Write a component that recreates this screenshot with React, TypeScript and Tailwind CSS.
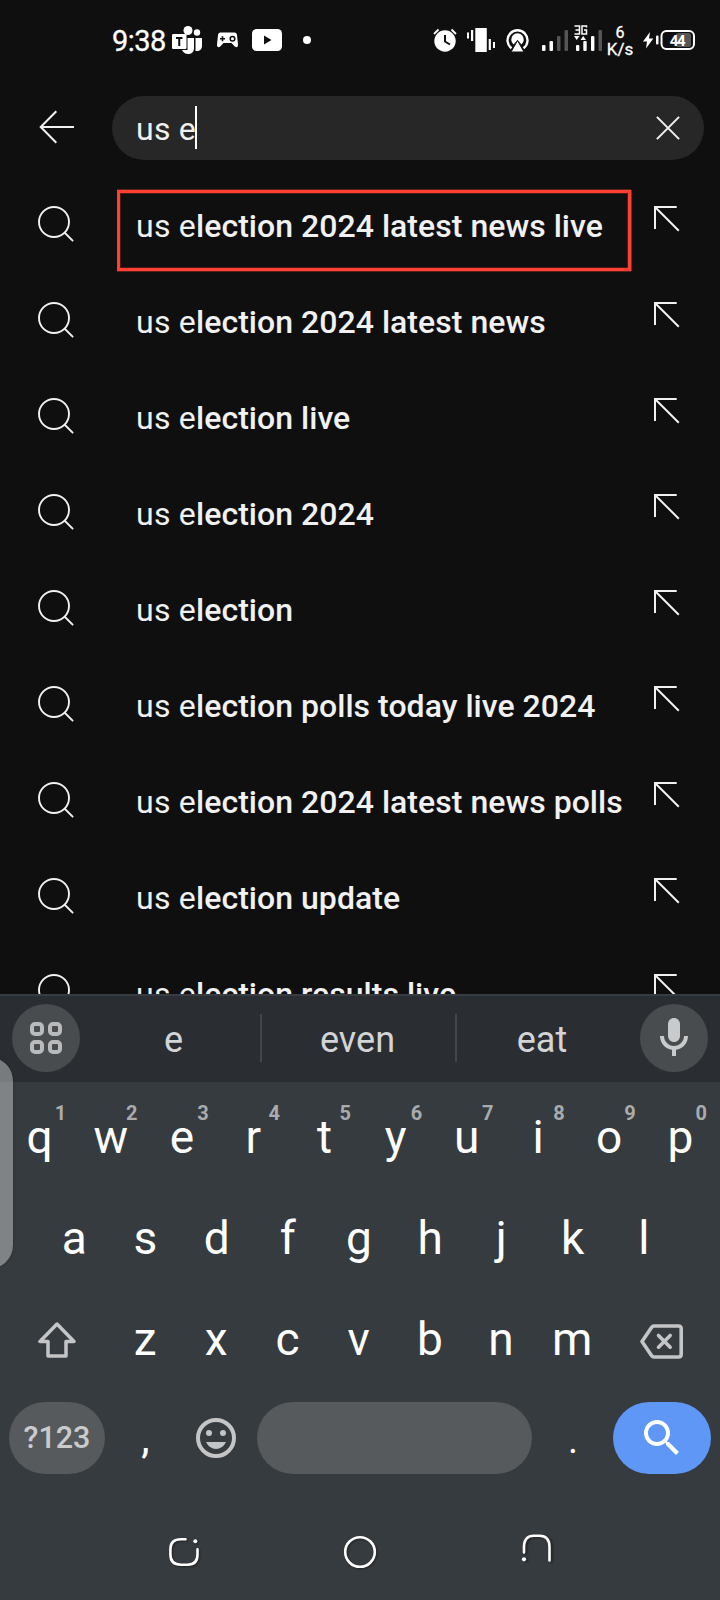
import React from "react";

const suggestions = [
  "lection 2024 latest news live",
  "lection 2024 latest news",
  "lection live",
  "lection 2024",
  "lection",
  "lection polls today live 2024",
  "lection 2024 latest news polls",
  "lection update",
  "lection results live",
];

function StatusBar() {
  return (
    <div className="flex h-[80px] items-center pl-[112px] pr-[25px] text-white">
      <span className="w-[60px] pt-[2px] text-[29px] leading-[78px] tracking-[-0.5px] whitespace-nowrap [-webkit-text-stroke:0.3px_white]">9:38</span>
      <svg className="h-[28px] w-[30px]" viewBox="0 0 30 28" fill="currentColor">
        <circle cx="16" cy="4.5" r="4.5" />
        <circle cx="25" cy="6.5" r="3.2" />
        <path d="M15.500 12H22v10c0 4-2.500 6-6 6-3 0-5-1.800-6-4h5.500z" />
        <path d="M23.500 12H30v8c0 3.500-2.500 5.500-6.500 5z" />
        <rect x="0" y="8" width="14.500" height="15" rx="1.200" />
        <path d="M4 12h6.500M7.250 12v8" stroke="#0f0f0f" strokeWidth="2" />
      </svg>
      <svg className="ml-[15px] h-[16px] w-[21px]" viewBox="0 0 21 16">
        <path fill="currentColor" d="M3.500.5h14c1.500 0 2.300 1 2.500 2.500l1 9.500c.2 2.800-1.800 3.200-3.200 2L14.500 11h-8l-3.300 3.500c-1.400 1.200-3.400.8-3.200-2L1 3C1.200 1.500 2 .5 3.500.5z" />
        <path d="M3 6.700h5M5.500 4.200v5" stroke="#0f0f0f" strokeWidth="1.600" />
        <circle cx="15.500" cy="6.700" r="2.300" fill="none" stroke="#0f0f0f" strokeWidth="1.500" />
      </svg>
      <svg className="ml-[14px] h-[22px] w-[30px]" viewBox="0 0 30 22">
        <rect width="30" height="22" rx="4.500" fill="currentColor" />
        <path d="M12 6.500v9l7.500-4.500z" fill="#0f0f0f" />
      </svg>
      <span className="ml-[21px] size-2 rounded-full bg-white" />

      <svg className="ml-auto h-[24px] w-[24px]" viewBox="0 0 24 24">
        <circle cx="12" cy="13" r="10.700" fill="currentColor" />
        <path d="M1 6l4.500-4.500M23 6l-4.500-4.500" stroke="currentColor" strokeWidth="1.800" />
        <path d="M12 7v6.500l5 3" fill="none" stroke="#0f0f0f" strokeWidth="2" />
      </svg>
      <svg className="ml-[10px] h-[24px] w-[28px]" viewBox="0 0 28 24" fill="currentColor">
        <rect x="8.300" y="0" width="11.500" height="24" rx=".5" />
        <rect x="0" y="4.500" width="2" height="6" />
        <rect x="4" y="2" width="2.200" height="11" />
        <rect x="21.700" y="11" width="2.200" height="11" />
        <rect x="26" y="14" width="2" height="6" />
      </svg>
      <svg className="ml-[11px] h-[24px] w-[23px]" viewBox="0 0 23 24">
        <path d="M5.500 20.300a10 10 0 1 1 12 0" fill="none" stroke="currentColor" strokeWidth="2.400" />
        <path d="M7.500 16.500a6.300 6.300 0 1 1 8 0L11.500 12z" fill="currentColor" />
        <path d="M11.500 12.500L18 24H5z" fill="currentColor" stroke="#0f0f0f" strokeWidth="1" />
      </svg>
      <svg className="ml-[13px] h-[21px] w-[26px]" viewBox="0 0 26 21" fill="currentColor">
        <rect x="0" y="15" width="3.500" height="6" rx="1" />
        <rect x="7.500" y="11" width="3.500" height="10" rx="1" />
        <rect x="15" y="6" width="3.500" height="15" rx="1" fill="#555" />
        <rect x="22.500" y="0" width="3.500" height="21" rx="1" fill="#555" />
      </svg>
      <svg className="ml-[6px] h-[27px] w-[28px] -translate-y-[2px]" viewBox="0 0 28 27" fill="currentColor">
        <path d="M.5 1h5v8h-5M1.500 5h4M12.500 2.500V1H8v8h4.500V5H10" fill="none" stroke="currentColor" strokeWidth="1.500" />
        <path d="M0 11h5.500L2.700 15zM6.500 15h5.500L9.200 11z" />
        <rect x="2" y="20" width="3.300" height="6" rx="1" />
        <rect x="9.300" y="16" width="3.400" height="10" rx="1" />
        <rect x="17" y="11" width="3.400" height="15" rx="1" />
        <rect x="24.500" y="5" width="3.500" height="21" rx="1" fill="#555" />
      </svg>
      <span className="ml-[6px] flex w-[24px] flex-col items-center pt-px text-[16px] leading-[16px] [-webkit-text-stroke:0.3px_white]">
        <span>6</span>
        <span className="text-[17px]">K/s</span>
      </span>
      <svg className="ml-[10px] h-[20px] w-[53px]" viewBox="0 0 53 20">
        <path d="M8 2L1 11.500h4L4 18.500 11.300 8.500H7z" fill="currentColor" />
        <rect x="14" y="5.500" width="2.500" height="9" rx="1" fill="currentColor" />
        <rect x="34" y="3" width="15" height="14" rx="2.500" fill="#555" />
        <rect x="19.500" y="1" width="32.500" height="18" rx="5" fill="none" stroke="currentColor" strokeWidth="2" />
        <text x="35.700" y="15.500" fill="currentColor" fontSize="15" fontWeight="700" textAnchor="middle" textLength="16">44</text>
      </svg>
    </div>
  );
}

function SearchBar() {
  return (
    <div className="flex h-[98px] items-start pt-4 pr-4 pl-[39px]">
      <svg className="mt-[14px] h-[34px] w-[36px]" viewBox="0 0 36 34" fill="none" stroke="#f1f1f1" strokeWidth="2">
        <path d="M35 17H2M17.300 1.300L1.700 17l15.600 15.700" />
      </svg>
      <div className="ml-[37px] flex h-16 flex-1 items-center rounded-full bg-[#272727] pr-[24px] pl-6">
        <span className="pt-[2px] text-[32px] tracking-[0.25px] text-[#f1f1f1]">us e</span>
        <span className="mb-px -ml-px h-[43px] w-[2px] bg-white" />
        <svg className="ml-auto size-6" viewBox="0 0 24 24" stroke="#f1f1f1" strokeWidth="2">
          <path d="M.9.9l22.200 22.200M23.100.9L.9 23.100" />
        </svg>
      </div>
    </div>
  );
}

function Suggestion({ rest, marked }: { rest: string; marked: boolean }) {
  return (
    <li className="relative flex h-24 shrink-0 items-start pr-[40px] pl-[38px]">
      <svg className="mt-[28px] size-9" viewBox="0 0 36 36" fill="none" stroke="#f1f1f1" strokeWidth="1.900">
        <circle cx="16" cy="16" r="15" />
        <path d="M26.500 26.500l8.600 8.600" />
      </svg>
      <span className="ml-[62px] text-[32px] leading-[96px] tracking-[0.25px] whitespace-nowrap text-[#f1f1f1]">
        us e<span className="font-medium tracking-[0.03px]">{rest}</span>
      </span>
      <svg className="mt-[28px] ml-auto h-[26px] w-[26px]" viewBox="0 0 26 26" fill="none" stroke="#f1f1f1" strokeWidth="2">
        <path d="M22.700 1H1v22M1 1l23.800 23.700" />
      </svg>
      {marked && (
        <span className="absolute top-[12px] left-[117px] h-[81px] w-[514px] border-[3px] border-[#ff4032] shadow-[1px_0_0_0_#7a2a22,0_1px_0_0_#5a211c,0_-1px_0_0_#5a211c,inset_0_0_0_1px_#4a1c18]" />
      )}
    </li>
  );
}

function Key({ label, hint }: { label: string; hint?: string }) {
  return (
    <span className="relative w-[71.2px] text-center text-[46px] leading-[100px] text-white">
      {label}
      {hint && (
        <span className="absolute top-[14px] left-[46.500px] w-5 text-center text-[20px] leading-6 font-bold text-[#a9abad]">{hint}</span>
      )}
    </span>
  );
}

function Keyboard() {
  return (
    <div className="relative h-[606px] bg-[#363b3f]">
      <div className="flex h-[88px] items-center border-t-2 border-[#363c40] bg-[#2a2e32] px-3 pb-[2px] text-[36px] text-[#d2d4d6]">
        <span className="flex size-[68px] items-center justify-center rounded-full bg-[#484c4e]">
          <svg className="size-8" viewBox="0 0 32 32" fill="none" stroke="#b9babb" strokeWidth="4">
            <rect x="2" y="2" width="10" height="10" rx="3" />
            <rect x="20" y="2" width="10" height="10" rx="3" />
            <rect x="2" y="20" width="10" height="10" rx="3" />
            <rect x="20" y="20" width="10" height="10" rx="3" />
          </svg>
        </span>
        <span className="w-[180px] pt-[4px] pl-[7px] text-center">e</span>
        <span className="h-12 w-[2px] bg-[#43474a]" />
        <span className="w-[193px] pt-[4px] pr-[2px] text-center">even</span>
        <span className="h-12 w-[2px] bg-[#43474a]" />
        <span className="flex-1 pt-[4px] pr-[13px] text-center">eat</span>
        <span className="flex size-[68px] items-center justify-center rounded-full bg-[#484c4e]">
          <svg className="size-12" viewBox="0 0 24 24" fill="#c8cacb">
            <path d="M12 14c1.660 0 3-1.340 3-3V5c0-1.660-1.340-3-3-3S9 3.340 9 5v6c0 1.660 1.340 3 3 3z" />
            <path d="M17 11c0 2.760-2.240 5-5 5s-5-2.240-5-5H5c0 3.530 2.610 6.430 6 6.920V21h2v-3.080c3.390-.49 6-3.390 6-6.920h-2z" />
          </svg>
        </span>
      </div>
      <div className="flex h-[101px] justify-center pt-[5px]">
        {"qwertyuiop".split("").map((k, i) => (
          <Key key={k} label={k} hint={"1234567890"[i]} />
        ))}
      </div>
      <div className="flex h-[101px] justify-center pt-[5px] pr-[2px]">
        {"asdfghjkl".split("").map((k) => (
          <Key key={k} label={k} />
        ))}
      </div>
      <div className="flex h-[101px] items-start pt-[5px] pl-[38px]">
        <svg className="mt-[32px] mr-[33.500px] h-[38px] w-[38px]" viewBox="0 0 38 38" fill="none" stroke="#c3c5c7" strokeWidth="3.500" strokeLinejoin="round">
          <path d="M19 3L2 20.500h8V35h18V20.500h8z" />
        </svg>
        {"zxcvbnm".split("").map((k) => (
          <Key key={k} label={k} />
        ))}
        <svg className="mt-[35px] ml-[32.500px] h-[35px] w-[43px]" viewBox="0 0 43 35" fill="none" stroke="#c3c5c7" strokeWidth="3.600" strokeLinejoin="round">
          <path d="M14 2h24.500q2.700 0 2.700 2.700v25.600q0 2.700-2.700 2.700H14q-1.500 0-2.500-1.500L2 17.500l9.500-14Q12.500 2 14 2z" />
          <path d="M18.500 11.500l11.700 11.700M30.200 11.500L18.500 23.200" strokeLinecap="round" />
        </svg>
      </div>
      <div className="mt-[17px] flex h-[72px] items-center pr-[9px] pl-[9px]">
        <span className="flex h-full w-[96px] items-center justify-center rounded-full bg-[#565a5d] text-[30.500px] font-medium text-[#c9cbcd]">?123</span>
        <span className="w-[75px] pt-px pl-[6px] text-center text-[42px] leading-[72px] text-white">,</span>
        <svg className="ml-3 size-12" viewBox="0 0 24 24" fill="#c3c5c7">
          <circle cx="12" cy="12" r="9" fill="none" stroke="#c3c5c7" strokeWidth="2" />
          <circle cx="8.500" cy="9.500" r="1.500" />
          <circle cx="15.500" cy="9.500" r="1.500" />
          <path d="M7 14h10q-1.700 3.500-5 3.500T7 14z" />
        </svg>
        <span className="ml-[17px] h-full w-[275px] rounded-full bg-[#565a5d]" />
        <span className="w-[81px] pt-[4px] pl-px text-center text-[38px] leading-[72px] text-white">.</span>
        <span className="flex h-full w-[98px] items-center justify-center rounded-full bg-[#5e97f6]">
          <svg className="size-12" viewBox="0 0 24 24" fill="white">
            <path d="M15.500 14h-.79l-.28-.27C15.410 12.590 16 11.110 16 9.500 16 5.910 13.090 3 9.500 3S3 5.910 3 9.500 5.910 16 9.500 16c1.610 0 3.090-.59 4.230-1.570l.27.28v.79l5 4.990L20.490 19l-4.990-5zm-6 0C7.010 14 5 11.990 5 9.500S7.010 5 9.500 5 14 7.010 14 9.500 11.990 14 9.500 14z" />
          </svg>
        </span>
      </div>
      <div className="mt-[58px] flex justify-between pr-[167px] pl-[167px]">
        <svg className="size-10 drop-shadow-[1px_1px_1px_rgba(0,0,0,0.4)]" viewBox="0 0 40 40" fill="none" stroke="white" strokeWidth="2.600" strokeLinecap="round">
          <path d="M18.500 7.300H14Q3.400 7.300 3.400 17v5.500Q3.400 32.700 14 32.700h6.500q10 0 10-10.200v-5.300" />
          <circle cx="28.300" cy="9.200" r="2" fill="white" stroke="none" />
        </svg>
        <svg className="size-10 drop-shadow-[1px_1px_1px_rgba(0,0,0,0.4)]" viewBox="0 0 40 40" fill="none" stroke="white" strokeWidth="2.600">
          <circle cx="20" cy="20" r="14.800" />
        </svg>
        <svg className="size-10 drop-shadow-[2px_1px_1px_rgba(0,0,0,0.4)]" viewBox="0 0 40 40" fill="none" stroke="white" strokeWidth="2.600" strokeLinecap="round">
          <path d="M11 20.500V15Q11 3.700 21 3.700h5.500Q36.500 3.700 36.500 15v13.500" />
          <circle cx="11" cy="27.300" r="2.100" fill="white" stroke="none" />
        </svg>
      </div>
      <span className="absolute top-[63px] left-[-20px] h-[212px] w-[33px] rounded-r-[24px] bg-white/37 shadow-[0_0_2px_1px_rgba(0,0,0,0.15)]" />
    </div>
  );
}

export default function App() {
  return (
    <div className="flex h-[1600px] w-[720px] flex-col overflow-hidden bg-[#0f0f0f] font-['Roboto',sans-serif]">
      <StatusBar />
      <SearchBar />
      <ul className="flex h-[816px] flex-col overflow-hidden">
        {suggestions.map((s, i) => (
          <Suggestion key={s} rest={s} marked={i === 0} />
        ))}
      </ul>
      <Keyboard />
    </div>
  );
}
